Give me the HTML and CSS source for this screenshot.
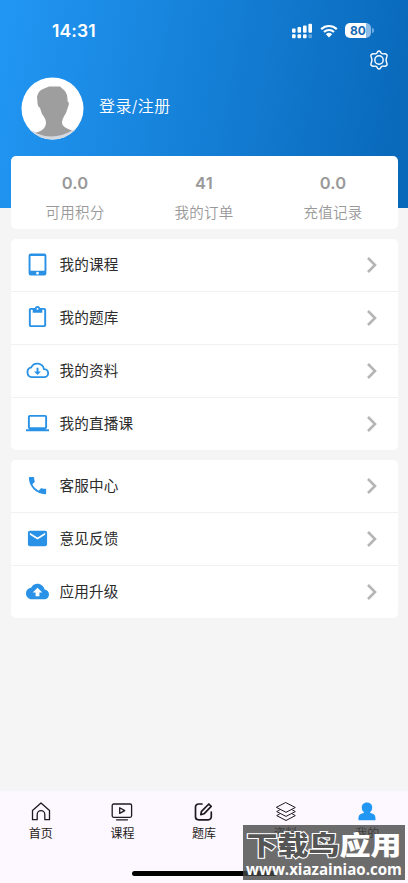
FILE: index.html
```html
<!DOCTYPE html>
<html lang="zh-CN">
<head>
<meta charset="utf-8">
<meta name="viewport" content="width=device-width, initial-scale=1">
<title>我的</title>
<link rel="stylesheet" href="styles.css">
</head>
<body>
<div class="app">
  <header class="header">
    <div class="status">
      <span class="time">14:31</span>
      <div class="status-icons">
        <svg width="22" height="16" viewBox="0 0 22 16" fill="#fff"><rect x="1" y="5.5" width="3.6" height="4.2" rx="1"/><rect x="6.5" y="4" width="3.6" height="5.7" rx="1"/><rect x="12" y="2.5" width="3.6" height="7.2" rx="1"/><rect x="17.4" y="0.7" width="3.6" height="9" rx="1"/><rect x="1" y="11.3" width="3.6" height="4" rx="1"/><rect x="6.5" y="11.3" width="3.6" height="4" rx="1"/><rect x="12" y="11.3" width="3.6" height="4" rx="1"/><rect x="17.4" y="11.3" width="3.6" height="4" rx="1" opacity=".35"/></svg>
        <svg class="wifi" width="18" height="14" viewBox="0 0 18 14"><path d="M1.2 5.1a11.3 11.3 0 0 1 15.6 0M4 8a7.3 7.3 0 0 1 10 0" fill="none" stroke="#fff" stroke-width="2.2"/><path d="M5.900 10.300a4.500 4.500 0 0 1 6.200 0L9 13.400z" fill="#fff"/></svg>
        <div class="battery"><span>80</span></div>
      </div>
    </div>
    <svg class="gear" width="20" height="20" viewBox="0 0 20 20" fill="none" stroke="#fff" stroke-width="1.4" stroke-linejoin="round"><path d="M8.600 1.800Q10 .2 11.400 1.800L12.200 3.200Q12.800 4 14 3.900L16 3.800Q18.600 4.400 18 6.400L17.300 8.500Q16.800 10 17.300 11.500L18 13.600Q18.600 15.600 16 16.200L14 16.100Q12.800 16 12.200 16.800L11.400 18.200Q10 19.800 8.600 18.200L7.800 16.800Q7.200 16 6 16.100L4 16.200Q1.400 15.600 2 13.600L2.700 11.500Q3.200 10 2.700 8.500L2 6.400Q1.400 4.400 4 3.800L6 3.900Q7.200 4 7.800 3.200Z"/><circle cx="10" cy="10" r="4.200"/></svg>
    <div class="profile">
      <svg class="avatar" width="63" height="63" viewBox="0 0 63 63"><defs><clipPath id="face"><circle cx="31.5" cy="31.5" r="31"/></clipPath></defs><circle cx="31.5" cy="31.5" r="31" fill="#fff"/><g clip-path="url(#face)"><path d="M6 52Q31 63 57 51V63H6Z" fill="#d4d9df"/><path d="M14.500 56Q25 53 25 46Q25 42 21 37L19 31Q16 29 16.500 25L16 20Q17 14 22 12L28 9.500H39L44 14Q47 18 46.500 24Q49 26 47 30L45 36Q41 42 41 46Q41 50 51 53.500Q33 64 14.500 56Z" fill="#9e9e9e"/></g></svg>
      <span class="login">登录/注册</span>
    </div>
  </header>
  <section class="stats card">
    <div class="stat"><b>0.0</b><span>可用积分</span></div>
    <div class="stat"><b>41</b><span>我的订单</span></div>
    <div class="stat"><b>0.0</b><span>充值记录</span></div>
  </section>
  <section class="menu card">
    <div class="row"><svg class="icon" viewBox="0 0 24 24"><path fill-rule="evenodd" d="M5 .5h14a2.300 2.300 0 0 1 2.300 2.300v18.400A2.300 2.300 0 0 1 19 23.500H5a2.300 2.300 0 0 1-2.300-2.300V2.800A2.300 2.300 0 0 1 5 .5zM4.700 3.200v15.300h14.600V3.200zM12 19.600a1.400 1.400 0 1 0 0 2.800 1.400 1.400 0 0 0 0-2.800z"/></svg><span>我的课程</span><svg class="chevron" viewBox="0 0 12 18"><path d="M2 2l7 7-7 7"/></svg></div>
    <div class="row"><svg class="icon" viewBox="0 0 24 24"><path d="M19 2h-4.180C14.400.84 13.300 0 12 0S9.600.84 9.180 2H5C3.900 2 3 2.900 3 4v16c0 1.100.9 2 2 2h14c1.100 0 2-.9 2-2V4c0-1.100-.9-2-2-2zm-7 0c.55 0 1 .45 1 1s-.45 1-1 1-1-.45-1-1 .45-1 1-1zm7 18H5V4h2v3h10V4h2z"/></svg><span>我的题库</span><svg class="chevron" viewBox="0 0 12 18"><path d="M2 2l7 7-7 7"/></svg></div>
    <div class="row"><svg class="icon" viewBox="0 0 24 24"><path fill="none" stroke="#2a92e6" stroke-width="1.900" d="M18.700 10.500A7 7 0 0 0 5.500 8.800 5.200 5.200 0 0 0 6 19h13a4.200 4.200 0 0 0-.3-8.500z"/><path d="M11 9h2v4h2.600L12 16.600 8.400 13H11z"/></svg><span>我的资料</span><svg class="chevron" viewBox="0 0 12 18"><path d="M2 2l7 7-7 7"/></svg></div>
    <div class="row"><svg class="icon" viewBox="0 0 24 24"><path d="M20 18c1.100 0 1.990-.9 1.990-2L22 5c0-1.100-.9-2-2-2H4c-1.100 0-2 .9-2 2v11c0 1.100.9 2 2 2H0v2h24v-2h-4zM4 5h16v11H4z"/></svg><span>我的直播课</span><svg class="chevron" viewBox="0 0 12 18"><path d="M2 2l7 7-7 7"/></svg></div>
  </section>
  <section class="menu card">
    <div class="row"><svg class="icon" viewBox="0 0 24 24"><path d="M6.620 10.790c1.440 2.830 3.760 5.140 6.590 6.590l2.200-2.200c.27-.27.67-.36 1.020-.24 1.120.37 2.330.57 3.570.57.55 0 1 .45 1 1V20c0 .55-.45 1-1 1C10.610 21 3 13.390 3 4c0-.55.45-1 1-1h3.500c.55 0 1 .45 1 1 0 1.250.2 2.450.57 3.570.11.35.03.74-.25 1.020z"/></svg><span>客服中心</span><svg class="chevron" viewBox="0 0 12 18"><path d="M2 2l7 7-7 7"/></svg></div>
    <div class="row"><svg class="icon" viewBox="0 0 24 24"><path d="M20 4H4c-1.100 0-1.990.9-1.990 2L2 18c0 1.100.9 2 2 2h16c1.100 0 2-.9 2-2V6c0-1.100-.9-2-2-2zm0 4-8 5-8-5V6l8 5 8-5z"/></svg><span>意见反馈</span><svg class="chevron" viewBox="0 0 12 18"><path d="M2 2l7 7-7 7"/></svg></div>
    <div class="row"><svg class="icon" viewBox="0 0 24 24"><path d="M19.350 10.040C18.670 6.590 15.640 4 12 4 9.110 4 6.600 5.640 5.350 8.040 2.340 8.360 0 10.910 0 14c0 3.310 2.690 6 6 6h13c2.760 0 5-2.240 5-5 0-2.640-2.050-4.780-4.650-4.960zM14 13v4h-4v-4H7l5-5 5 5z"/></svg><span>应用升级</span><svg class="chevron" viewBox="0 0 12 18"><path d="M2 2l7 7-7 7"/></svg></div>
  </section>
  <nav class="tabs">
    <div class="tab"><svg viewBox="0 0 22 22"><path d="M2.500 9.500L11 2l8.500 7.500v9.200h-4.700v-5.200a3.800 3.800 0 0 0-7.600 0v5.200H2.500z"/></svg><span>首页</span></div>
    <div class="tab"><svg viewBox="0 0 22 22"><rect x="1.200" y="3" width="19.400" height="13.300" rx="1.500"/><path d="M8.700 6.800v5.600l5-2.800zM5.500 18.800h11"/></svg><span>课程</span></div>
    <div class="tab"><svg class="edit" viewBox="0 0 22 22"><path d="M9 3H5.500a3 3 0 0 0-3 3v9.800a3 3 0 0 0 3 3h9.800a3 3 0 0 0 3-3V11M15.800 3L18.200 5.400 11 12.800l-3.200.8.700-3.300z"/></svg><span>题库</span></div>
    <div class="tab"><svg class="layers" viewBox="0 0 22 22"><path d="M11 1.700l9.300 4.800-9.300 4.800-9.300-4.800zM4.500 9l-2.800 1.600L11 15.400l9.300-4.800L17.500 9M4.500 13l-2.800 1.600L11 19.500l9.300-4.900L17.500 13"/></svg><span>资料</span></div>
    <div class="tab"><svg class="user" viewBox="0 0 22 22"><path d="M11 1.500c3.400 0 5.400 2.400 5.200 5.200-.1 2-1 3.600-2.200 4.600 0 .6.600.9 2 1.300 2.400.8 3.800 1.900 3.500 6.600h-17c-.3-4.700 1.100-5.800 3.500-6.600 1.400-.4 2-.7 2-1.300-1.200-1-2.100-2.600-2.200-4.600C5.600 3.900 7.600 1.500 11 1.500z"/></svg><span>我的</span></div>
  </nav>
  <div class="home-bar"></div>
  <div class="watermark">
    <div class="wm-name"><span class="outline">下载鸟</span><span>应用</span></div>
    <div class="wm-url">www.xiazainiao.com</div>
  </div>
</div>
</body>
</html>
```
FILE: styles.css
```css
* { box-sizing: border-box; }
body {
  margin: 0;
  background: #f5f5f5;
  font-family: "Inter", "Noto Sans CJK SC", sans-serif;
}
svg { display: block; flex: none; }
.app {
  position: relative;
  width: 408px;
  height: 883px;
  overflow: hidden;
  display: flex;
  flex-direction: column;
}
.header {
  height: 208px;
  flex: none;
  background: linear-gradient(100deg, #2196f3 2%, #0868b9 98%);
  color: #fff;
  display: flex;
  flex-direction: column;
}
.status {
  height: 50px;
  padding: 12px 34px 0 52px;
  display: flex;
  justify-content: space-between;
}
.time { font-size: 17.5px; line-height: 38px; height: 38px; font-weight: 600; letter-spacing: 0.15px; }
.status-icons { display: flex; align-items: center; height: 37px; }
.wifi { margin: 0 7px 0 7px; }
.battery {
  position: relative;
  width: 26px;
  height: 15px;
  border-radius: 5px;
  background: linear-gradient(90deg, #fff 79%, #8bbbe6 79%);
  color: #1769b3;
  font-size: 12px;
  font-weight: 700;
  line-height: 15px;
  text-align: center;
  margin-right: 3px;
}
.battery::after {
  content: "";
  position: absolute;
  left: 27px;
  top: 5px;
  width: 2px;
  height: 5px;
  border-radius: 0 2px 2px 0;
  background: #73acdf;
}
.gear { align-self: flex-end; margin-right: 19px; }
.profile { display: flex; align-items: center; margin: 7px 0 0 20.500px; gap: 15.500px; }
.login { font-size: 16px; letter-spacing: 0.4px; line-height: 24px; font-weight: 350; margin-top: -5px; }
.card { margin: 0 10.500px; background: #fff; border-radius: 5px; flex: none; }
.stats { display: flex; height: 73px; margin-top: -52px; margin-bottom: 9.500px; color: #999; }
.stat { flex: 1; display: flex; flex-direction: column; align-items: center; padding-top: 16px; }
.stat b { font-size: 16.500px; font-weight: 600; line-height: 22px; letter-spacing: 0.2px; }
.stat span { font-size: 14.500px; letter-spacing: 0.2px; line-height: 20px; margin-top: 9px; font-weight: 350; }
.menu { margin-bottom: 10px; }
.row {
  height: 53px;
  display: flex;
  align-items: center;
  padding: 0 20px 0 15px;
  border-bottom: 1px solid #f1f1f1;
  color: #2c2c2c;
  font-size: 14.600px;
  letter-spacing: 0.15px;
}
.row span { padding-bottom: 3px; }
.row:last-child { border-bottom: 0; height: 52px; }
.icon { width: 23px; height: 23px; fill: #2a92e6; margin-right: 11px; }
.chevron { width: 12px; height: 18px; margin-left: auto; fill: none; stroke: #b5b5b5; stroke-width: 2.600; }
.tabs {
  margin-top: auto;
  height: 92px;
  background: #fdf7ff;
  display: flex;
  color: #1d1b20;
}
.tab { flex: 1; display: flex; flex-direction: column; align-items: center; padding-top: 10px; }
.tab svg { width: 22px; height: 22px; fill: none; stroke: #1d1b20; stroke-width: 1.300; stroke-linejoin: round; stroke-linecap: round; }
.tab .edit { stroke-width: 1.700; }
.tab .layers { stroke-width: 1; }
.tab .user { fill: #2196f3; stroke: none; }
.tab span { font-size: 12px; line-height: 18px; margin-top: 2px; }
.home-bar {
  position: absolute;
  left: 132px;
  top: 871px;
  width: 145px;
  height: 5px;
  border-radius: 3px;
  background: #000;
}
.watermark {
  position: absolute;
  left: 243px;
  top: 825px;
  width: 162px;
  height: 55px;
  background: rgba(70, 70, 70, 0.79);
  color: #fff;
  text-align: center;
  white-space: nowrap;
}
.wm-name { font-size: 31px; font-weight: 900; line-height: 34px; height: 34px; margin-top: 4px; transform: scaleY(0.84); }
.outline { color: #555; -webkit-text-stroke: 2.500px #fff; paint-order: stroke fill; }
.wm-url { font-family: "Open Sans", "Noto Sans", sans-serif; font-size: 15.100px; font-weight: 700; line-height: 13px; }
```
